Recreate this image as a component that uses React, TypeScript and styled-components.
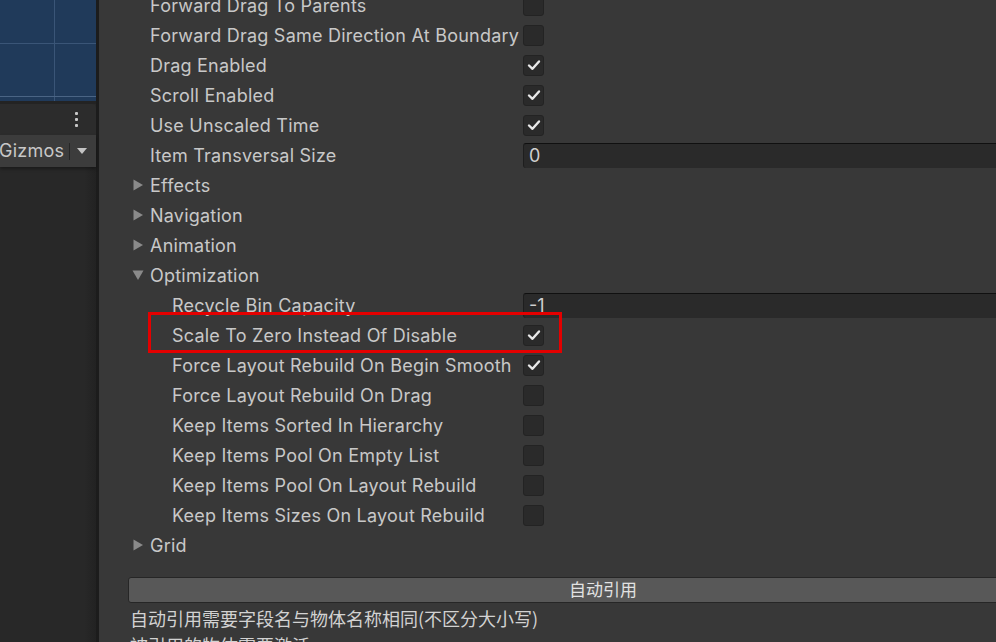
import React from "react";
import styled, { createGlobalStyle } from "styled-components";

const Global = createGlobalStyle`
  html, body { margin: 0; padding: 0; background: #383838; }
  body { width: 996px; height: 642px; overflow: hidden; font-family: Inter, "Noto Sans CJK SC", sans-serif; }
  * { box-sizing: border-box; }
`;

const Screen = styled.div`
  display: flex;
  width: 996px;
  height: 642px;
  overflow: hidden;
  background: #383838;
`;

const LeftPane = styled.div`
  width: 96px;
  flex: none;
  display: flex;
  flex-direction: column;
  background: #282828;
`;

const SceneView = styled.div`
  height: 101px;
  background: #203a5a;
  flex: none;
  svg { display: block; }
`;

const SceneGap = styled.div`
  height: 3px;
  background: #232323;
  flex: none;
`;

const PaneHeader = styled.div`
  height: 31px;
  flex: none;
  background: #2c2c2c;
  border-top-right-radius: 4px;
  display: flex;
  justify-content: flex-end;
  align-items: center;
  padding-right: 18px;
`;

const Kebab = styled.div`
  display: flex;
  flex-direction: column;
  gap: 3px;
  span {
    width: 3px;
    height: 3px;
    background: #c8c8c8;
    border-radius: 1px;
  }
`;

const GizmoBar = styled.div`
  height: 32px;
  flex: none;
  background: #3c3c3c;
  display: flex;
  align-items: center;
  color: #c8c8c8;
  font-size: 18px;
  letter-spacing: 0.25px;
  box-shadow: 0 2px 3px rgba(0, 0, 0, 0.35);
  position: relative;
`;

const GizmoLabel = styled.span`
  margin-left: -1px;
  margin-top: -2px;
  width: 70px;
  flex: none;
`;

const BarSep = styled.span`
  width: 1px;
  height: 17px;
  background: #262626;
  flex: none;
`;

const DropArrow = styled.span`
  margin-left: 7px;
  width: 0;
  height: 0;
  border-left: 5px solid transparent;
  border-right: 5px solid transparent;
  border-top: 6px solid #c4c4c4;
`;

const PaneBody = styled.div`
  flex: 1;
  background: linear-gradient(to right, #282828 88%, #222 100%);
`;

const Divider = styled.div`
  width: 3px;
  flex: none;
  background: #1c1c1c;
`;

const Inspector = styled.div`
  flex: 1;
  overflow: hidden;
  position: relative;
`;

const Content = styled.div`
  width: 950px;
  margin-left: 29px;
  margin-top: -10px;
  display: flex;
  flex-direction: column;
`;

const Row = styled.div<{ $indent: number }>`
  position: relative;
  height: 30px;
  display: grid;
  align-items: center;
  padding-left: ${(p) => p.$indent}px;
  grid-template-columns: ${(p) => 395 - p.$indent}px 1fr;
`;

const Label = styled.span`
  color: #c8c8c8;
  font-size: 18px;
  white-space: nowrap;
  letter-spacing: 0.22px;
`;

const FoldRow = styled.div`
  height: 30px;
  display: flex;
  align-items: center;
  padding-left: 4px;
  gap: 6px;
`;

const Arrow = styled.span`
  width: 12px;
  height: 12px;
  display: flex;
  align-items: center;
  justify-content: center;
  svg { display: block; }
`;

const CheckBox = styled.span`
  width: 21px;
  height: 21px;
  border-radius: 3px;
  background: #2a2a2a;
  border: 1px solid #232323;
  display: flex;
  align-items: center;
  justify-content: center;
`;

const Field = styled.div`
  height: 25px;
  border-radius: 3px;
  background: #2a2a2a;
  border-top: 1px solid #101010;
  border-left: 1px solid #1e1e1e;
  color: #d0d0d0;
  font-size: 18px;
  display: flex;
  align-items: center;
  padding-left: 5px;
`;

const Highlight = styled.div`
  position: absolute;
  left: 20px;
  top: -8px;
  width: 414px;
  height: 41px;
  border: 3px solid #e40000;
  pointer-events: none;
`;

const ActionButton = styled.div`
  margin-top: 17px;
  height: 26px;
  background: #585858;
  border: 1px solid #262626;
  border-radius: 3px;
  color: #e2e2e2;
  font-size: 17px;
  display: flex;
  align-items: center;
  justify-content: center;
  padding-bottom: 3px;
  font-family: "Noto Sans CJK SC", sans-serif;
`;

const Note = styled.div`
  margin-top: 2px;
  padding-left: 2px;
  color: #d2d2d2;
  font-size: 18px;
  line-height: 27px;
  font-family: "Noto Sans CJK SC", sans-serif;
`;

const Check = () => (
  <svg width="14" height="12" viewBox="0 0 14 12">
    <path d="M2 6.5 L5.5 9.8 L12 2.5" fill="none" stroke="#e8e8e8" strokeWidth="2.4" strokeLinecap="round" strokeLinejoin="round" />
  </svg>
);

type Item =
  | { kind: "bool"; label: string; value: boolean; indent: number; mark?: boolean }
  | { kind: "num"; label: string; value: string; indent: number }
  | { kind: "fold"; label: string; open: boolean };

const items: Item[] = [
  { kind: "bool", label: "Forward Drag To Parents", value: false, indent: 22 },
  { kind: "bool", label: "Forward Drag Same Direction At Boundary", value: false, indent: 22 },
  { kind: "bool", label: "Drag Enabled", value: true, indent: 22 },
  { kind: "bool", label: "Scroll Enabled", value: true, indent: 22 },
  { kind: "bool", label: "Use Unscaled Time", value: true, indent: 22 },
  { kind: "num", label: "Item Transversal Size", value: "0", indent: 22 },
  { kind: "fold", label: "Effects", open: false },
  { kind: "fold", label: "Navigation", open: false },
  { kind: "fold", label: "Animation", open: false },
  { kind: "fold", label: "Optimization", open: true },
  { kind: "num", label: "Recycle Bin Capacity", value: "-1", indent: 44 },
  { kind: "bool", label: "Scale To Zero Instead Of Disable", value: true, indent: 44, mark: true },
  { kind: "bool", label: "Force Layout Rebuild On Begin Smooth", value: true, indent: 44 },
  { kind: "bool", label: "Force Layout Rebuild On Drag", value: false, indent: 44 },
  { kind: "bool", label: "Keep Items Sorted In Hierarchy", value: false, indent: 44 },
  { kind: "bool", label: "Keep Items Pool On Empty List", value: false, indent: 44 },
  { kind: "bool", label: "Keep Items Pool On Layout Rebuild", value: false, indent: 44 },
  { kind: "bool", label: "Keep Items Sizes On Layout Rebuild", value: false, indent: 44 },
  { kind: "fold", label: "Grid", open: false },
];

const FoldArrow = ({ open }: { open: boolean }) => (
  <Arrow>
    {open ? (
      <svg width="12" height="10" viewBox="0 0 12 10">
        <path d="M0.5 0.5 L11.5 0.5 L6 10 Z" fill="#8a8a8a" />
      </svg>
    ) : (
      <svg width="10" height="12" viewBox="0 0 10 12">
        <path d="M0.5 0.5 L10 6 L0.5 11.5 Z" fill="#8a8a8a" />
      </svg>
    )}
  </Arrow>
);

export default function App() {
  return (
    <Screen>
      <Global />
      <LeftPane>
        <SceneView>
          <svg width="96" height="101" viewBox="0 0 96 101">
            <line x1="0" y1="43.5" x2="96" y2="43.5" stroke="#3a5577" strokeWidth="1" />
            <line x1="54.5" y1="0" x2="54.5" y2="101" stroke="#3a5577" strokeWidth="1" />
            <line x1="0" y1="96.5" x2="96" y2="96.5" stroke="#4a6484" strokeWidth="1" />
          </svg>
        </SceneView>
        <SceneGap />
        <PaneHeader>
          <Kebab>
            <span />
            <span />
            <span />
          </Kebab>
        </PaneHeader>
        <GizmoBar>
          <GizmoLabel>Gizmos</GizmoLabel>
          <BarSep />
          <DropArrow />
        </GizmoBar>
        <PaneBody />
      </LeftPane>
      <Divider />
      <Inspector>
        <Content>
          {items.map((it) =>
            it.kind === "fold" ? (
              <FoldRow key={it.label}>
                <FoldArrow open={it.open} />
                <Label>{it.label}</Label>
              </FoldRow>
            ) : (
              <Row key={it.label} $indent={it.indent}>
                {it.kind === "bool" && it.mark && <Highlight />}
                <Label>{it.label}</Label>
                {it.kind === "bool" ? (
                  <CheckBox>{it.value && <Check />}</CheckBox>
                ) : (
                  <Field>{it.value}</Field>
                )}
              </Row>
            )
          )}
          <ActionButton>自动引用</ActionButton>
          <Note>
            自动引用需要字段名与物体名称相同(不区分大小写)
            <br />
            被引用的物体需要激活
          </Note>
        </Content>
      </Inspector>
    </Screen>
  );
}
